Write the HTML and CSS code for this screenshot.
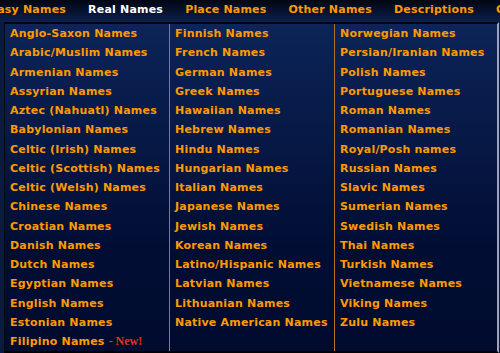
FILE: index.html
```html
<!DOCTYPE html>
<html>
<head>
<meta charset="utf-8">
<link rel="stylesheet" href="styles.css">
</head>
<body>
<nav class="topnav">
  <a class="tab">Fantasy Names</a>
  <a class="tab active">Real Names</a>
  <a class="tab">Place Names</a>
  <a class="tab">Other Names</a>
  <a class="tab">Descriptions</a>
  <a class="tab">Generators</a>
</nav>
<div class="panel">
  <ul class="col">
    <li>Anglo-Saxon Names</li>
    <li>Arabic/Muslim Names</li>
    <li>Armenian Names</li>
    <li>Assyrian Names</li>
    <li>Aztec (Nahuatl) Names</li>
    <li>Babylonian Names</li>
    <li>Celtic (Irish) Names</li>
    <li>Celtic (Scottish) Names</li>
    <li>Celtic (Welsh) Names</li>
    <li>Chinese Names</li>
    <li>Croatian Names</li>
    <li>Danish Names</li>
    <li>Dutch Names</li>
    <li>Egyptian Names</li>
    <li>English Names</li>
    <li>Estonian Names</li>
    <li>Filipino Names <span class="new">- New!</span></li>
  </ul>
  <ul class="col">
    <li>Finnish Names</li>
    <li>French Names</li>
    <li>German Names</li>
    <li>Greek Names</li>
    <li>Hawaiian Names</li>
    <li>Hebrew Names</li>
    <li>Hindu Names</li>
    <li>Hungarian Names</li>
    <li>Italian Names</li>
    <li>Japanese Names</li>
    <li>Jewish Names</li>
    <li>Korean Names</li>
    <li>Latino/Hispanic Names</li>
    <li>Latvian Names</li>
    <li>Lithuanian Names</li>
    <li>Native American Names</li>
  </ul>
  <ul class="col">
    <li>Norwegian Names</li>
    <li>Persian/Iranian Names</li>
    <li>Polish Names</li>
    <li>Portuguese Names</li>
    <li>Roman Names</li>
    <li>Romanian Names</li>
    <li>Royal/Posh names</li>
    <li>Russian Names</li>
    <li>Slavic Names</li>
    <li>Sumerian Names</li>
    <li>Swedish Names</li>
    <li>Thai Names</li>
    <li>Turkish Names</li>
    <li>Vietnamese Names</li>
    <li>Viking Names</li>
    <li>Zulu Names</li>
  </ul>
</div>
</body>
</html>
```

FILE: styles.css
```css
html, body {
  margin: 0;
  padding: 0;
}
body {
  width: 500px;
  height: 353px;
  overflow: hidden;
  background: #0a1a42;
  font-family: "DejaVu Sans", Verdana, sans-serif;
  font-weight: bold;
  font-size: 11px;
  letter-spacing: 0.2px;
}
.topnav {
  height: 22px;
  display: flex;
  align-items: center;
  white-space: nowrap;
  background: linear-gradient(#000612, #0c1f4c);
  margin-left: -42px;
}
.tab {
  color: #ff9a00;
  padding: 0 11px;
  line-height: 18px;
  margin-top: -2px;
}
.tab.active {
  color: #ffffff;
}
.panel {
  margin-left: 4px;
  width: 492px;
  height: 327px;
  border-top: 2px solid #02050e;
  border-left: 1px solid #020816;
  border-right: 2px solid #9ea0bc;
  border-bottom: 2px solid #000000;
  background: linear-gradient(#0c2458, #010d33 70%, #000b2e);
  display: grid;
  grid-template-columns: 164px 165px 1fr;
}
.col {
  list-style: none;
  margin: 0;
  padding: 0 0 0 5px;
  border-left: 1px solid #b8701c;
}
.col:first-child {
  border-left: none;
}
.col li {
  color: #ff9a00;
  line-height: 19.25px;
  height: 19.25px;
  white-space: nowrap;
}
.new {
  color: #e8301c;
  font-family: "Liberation Serif", "Times New Roman", serif;
  font-size: 12px;
  letter-spacing: 0;
}
```
